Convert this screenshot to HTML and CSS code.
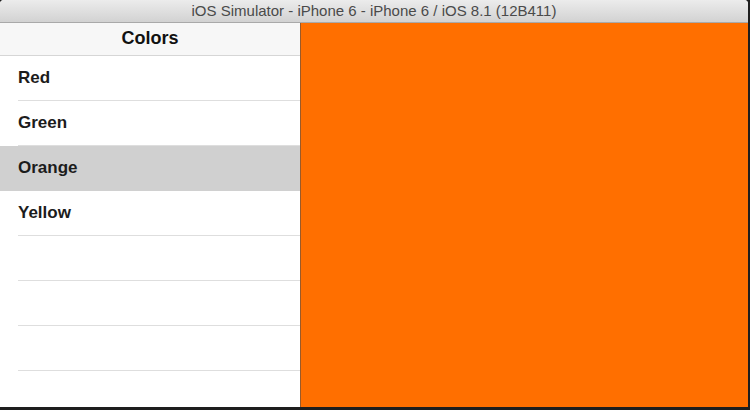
FILE: index.html
```html
<!DOCTYPE html>
<html lang="en">
<head>
    <meta charset="UTF-8">
    <title>iOS Simulator - iPhone 6</title>
    <link rel="stylesheet" href="styles.css">
</head>
<body>
    <div class="window">
        <div class="titlebar">iOS Simulator - iPhone 6 - iPhone 6 / iOS 8.1 (12B411)</div>
        <div class="screen">
            <div class="master">
                <div class="navbar">Colors</div>
                <ul class="list">
                    <li class="row">Red</li>
                    <li class="row">Green</li>
                    <li class="row selected">Orange</li>
                    <li class="row">Yellow</li>
                    <li class="row"></li>
                    <li class="row"></li>
                    <li class="row"></li>
                    <li class="row"></li>
                </ul>
            </div>
            <div class="detail"></div>
        </div>
    </div>
</body>
</html>
```

FILE: styles.css
```css
body {
    margin: 0;
    background-color: #1e1e1e;
    font-family: "Liberation Sans", Arial, sans-serif;
    width: 750px;
    height: 410px;
    overflow: hidden;
}

.window {
    width: 748px;
    height: 407px;
    border-radius: 4px 4px 0 0;
    overflow: hidden;
    display: flex;
    flex-direction: column;
    background-color: #fff;
}

.titlebar {
    height: 23px;
    line-height: 22px;
    box-sizing: border-box;
    text-align: center;
    font-size: 15px;
    color: #4a4a4a;
    background: linear-gradient(#ececec, #d2d2d2);
    border-bottom: 1px solid #a9a9a9;
}

.screen {
    flex: 1;
    display: flex;
}

.master {
    width: 300px;
    border-right: 1px solid #9a5a2a;
    display: flex;
    flex-direction: column;
}

.navbar {
    height: 33px;
    line-height: 31px;
    box-sizing: border-box;
    background-color: #f7f7f7;
    border-bottom: 1px solid #d6d6d6;
    text-align: center;
    font-size: 18px;
    font-weight: bold;
    color: #111;
}

.list {
    list-style: none;
    margin: 0;
    padding: 0;
}

.row {
    height: 45px;
    line-height: 44px;
    box-sizing: border-box;
    padding-left: 18px;
    font-size: 17px;
    font-weight: bold;
    color: #1c1c1c;
    position: relative;
}

.row::after {
    content: "";
    position: absolute;
    left: 18px;
    right: 0;
    bottom: 0;
    border-bottom: 1px solid #dedede;
}

.row.selected {
    background-color: #d0d0d0;
}

.row.selected::after {
    border-bottom-color: #d0d0d0;
}

.detail {
    flex: 1;
    background-color: #ff6f00;
}
```
